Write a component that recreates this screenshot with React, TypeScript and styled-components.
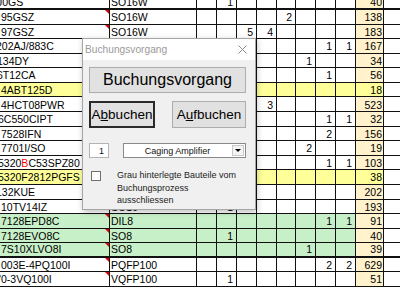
import React from 'react'
import styled, { createGlobalStyle } from 'styled-components'

const GlobalStyle = createGlobalStyle`
  body {
    margin: 0;
    background: #fff;
    overflow: hidden;
  }
`

type Tone = 'plain' | 'yellow' | 'green'

type SheetRow = {
  part: React.ReactNode
  shift?: number
  pkg: string
  counts: Record<number, number>
  sum: number
  tone?: Tone
  note?: boolean
  thick?: boolean
}

const Red = styled.span`
  color: #ff0000;
`

const rows: SheetRow[] = [
  { part: 'J0GS', shift: -4, pkg: 'SO16W', counts: { 1: 1 }, sum: 40, note: true, thick: true },
  { part: '95GSZ', pkg: 'SO16W', counts: { 4: 2 }, sum: 138, note: true },
  { part: '97GSZ', pkg: 'SO16W', counts: { 2: 5, 3: 4 }, sum: 183, note: true },
  { part: '202AJ/883C', shift: -5, pkg: 'SO16W', counts: { 6: 1, 7: 1 }, sum: 167 },
  { part: '134DY', shift: -4, pkg: 'SO8', counts: { 5: 1 }, sum: 34 },
  { part: '6T12CA', shift: -4, pkg: 'SO8', counts: { 6: 1 }, sum: 56 },
  { part: '4ABT125D', pkg: 'SO14', counts: {}, sum: 18, tone: 'yellow' },
  { part: '4HCT08PWR', pkg: 'TSSOP14', counts: { 3: 3 }, sum: 523 },
  { part: '6C550CIPT', shift: -3, pkg: 'TQFP48', counts: { 6: 1, 7: 1 }, sum: 32 },
  { part: '7528IFN', pkg: 'DIP14', counts: { 6: 2 }, sum: 156 },
  { part: '7701I/SO', pkg: 'SO8', counts: { 5: 2 }, sum: 19 },
  {
    part: (
      <>
        5320<Red>B</Red>C53SPZ80
      </>
    ),
    shift: -3,
    pkg: 'LQFP80',
    counts: { 6: 1, 7: 1 },
    sum: 103,
  },
  { part: '5320F2812PGFS', shift: -3, pkg: 'LQFP176', counts: {}, sum: 38, tone: 'yellow' },
  { part: '132KUE', shift: -5, pkg: 'SOT23', counts: {}, sum: 202 },
  { part: '10TV14IZ', pkg: 'SO16', counts: { 1: 1 }, sum: 193 },
  { part: '7128EPD8C', pkg: 'DIL8', counts: { 6: 1, 7: 1 }, sum: 91, tone: 'green', note: true },
  { part: '7128EVO8C', pkg: 'SO8', counts: { 1: 1 }, sum: 40, tone: 'green', note: true },
  { part: '7S10XLVO8I', pkg: 'SO8', counts: { 5: 1 }, sum: 39, tone: 'green', note: true, thick: true },
  { part: '003E-4PQ100I', pkg: 'PQFP100', counts: { 6: 2, 7: 2 }, sum: 629, note: true },
  { part: "'0-3VQ100I", shift: -2, pkg: 'VQFP100', counts: { 1: 1 }, sum: 51, note: true },
]

const toneColor: Record<Tone, string> = {
  plain: '#ffffff',
  yellow: '#ffff99',
  green: '#c8f0c8',
}

const Screen = styled.div`
  position: relative;
  width: 400px;
  height: 289px;
  overflow: hidden;
  font-family: 'Liberation Sans', Arial, sans-serif;
`

const Sheet = styled.div`
  margin-top: -4.58px;
  font-size: 10.5px;
  color: #000;
`

const Row = styled.div<{ $tone: Tone; $thick?: boolean }>`
  display: grid;
  grid-template-columns: 110px 87px 20px 20px 20px 20px 19px 20px 20px 20px 28px 1fr;
  height: 14.58px;
  box-sizing: border-box;
  border-bottom: ${({ $thick }) => ($thick ? 2 : 1)}px solid #111;
  background: ${({ $tone }) => toneColor[$tone]};
`

const Cell = styled.div<{ $note?: boolean }>`
  position: relative;
  box-sizing: border-box;
  border-right: 1px solid #111;
  display: flex;
  align-items: flex-end;
  padding: 0 0 1px 1px;
  line-height: 1;
  white-space: nowrap;
  overflow: hidden;

  &::after {
    content: '';
    display: ${({ $note }) => ($note ? 'block' : 'none')};
    position: absolute;
    top: 0;
    right: 0;
    border-top: 4px solid #e00000;
    border-left: 4px solid transparent;
  }
`

const PartText = styled.span``

const NumCell = styled(Cell)`
  justify-content: flex-end;
  padding: 0 3px 1px 0;
`

const SumCell = styled(NumCell)<{ $tone: Tone }>`
  padding-right: 1px;
  background: ${({ $tone }) => ($tone === 'yellow' ? '#ffff99' : '#fff2cc')};
`

const Filler = styled.div`
  background: #fff;
`

const Dialog = styled.div`
  position: absolute;
  left: 82px;
  top: 38px;
  width: 174px;
  height: 172px;
  box-sizing: border-box;
  border: 1px solid #a6a6a6;
  background: #f0f0f0;
  box-shadow: 1px 2px 6px rgba(0, 0, 0, 0.25);
  display: flex;
  flex-direction: column;
`

const TitleBar = styled.div`
  height: 21px;
  background: #fff;
  display: flex;
  align-items: center;
  justify-content: space-between;
  padding: 0 8px 0 2px;
  color: #9a9a9a;
  font-size: 10.2px;
`

const Body = styled.div`
  padding: 7px 9px 0 6px;
  display: flex;
  flex-direction: column;
`

const Button = styled.div<{ $focused?: boolean; $w?: number }>`
  box-sizing: border-box;
  width: ${({ $w }) => ($w ? `${$w}px` : '100%')};
  height: 27px;
  background: #e1e1e1;
  border: ${({ $focused }) => ($focused ? '2px solid #2a2a2a' : '1px solid #adadad')};
  display: flex;
  align-items: center;
  justify-content: center;
  font-size: 13.5px;
  color: #000;
`

const BigButton = styled(Button)`
  height: 26px;
  font-size: 16px;
`

const ButtonRow = styled.div`
  display: flex;
  justify-content: space-between;
  margin-top: 8px;
`

const InputRow = styled.div`
  display: flex;
  margin-top: 15px;
  height: 15px;
  font-size: 9px;
  color: #111;
`

const NumberBox = styled.div`
  box-sizing: border-box;
  width: 20px;
  background: #fff;
  border: 1px solid #b4b4b4;
  display: flex;
  align-items: center;
  justify-content: center;
  padding-left: 5px;
`

const Select = styled.div`
  box-sizing: border-box;
  flex: 1;
  margin-left: 14px;
  background: #fff;
  border: 1px solid #8a8a8a;
  display: flex;
  align-items: stretch;
`

const SelectLabel = styled.div`
  flex: 1;
  display: flex;
  align-items: center;
  justify-content: center;
`

const SelectArrow = styled.div`
  box-sizing: border-box;
  width: 12px;
  margin: 1px;
  border: 1px solid #c8c8c8;
  background: #f4f4f4;
  display: flex;
  align-items: center;
  justify-content: center;

  &::before {
    content: '';
    border-top: 3px solid #000;
    border-left: 3px solid transparent;
    border-right: 3px solid transparent;
  }
`

const CheckRow = styled.div`
  display: flex;
  align-items: flex-start;
  margin-top: 11px;
`

const CheckBox = styled.div`
  box-sizing: border-box;
  width: 10px;
  height: 10px;
  margin: 2px 0 0 2px;
  background: #fff;
  border: 1px solid #707070;
`

const CheckLabel = styled.div`
  margin-left: 16px;
  font-size: 9px;
  line-height: 12.5px;
  color: #1c1c1c;
`

const CloseIcon = () => (
  <svg width="9" height="9" viewBox="0 0 9 9">
    <path d="M0.5 0.5 L8.5 8.5 M8.5 0.5 L0.5 8.5" stroke="#8c8c8c" strokeWidth="1" />
  </svg>
)

export default function App() {
  return (
    <Screen>
      <GlobalStyle />
      <Sheet>
        {rows.map((r, i) => {
          const tone = r.tone ?? 'plain'
          return (
            <Row key={i} $tone={tone} $thick={r.thick}>
              <Cell $note={r.note}>
                <PartText style={{ marginLeft: r.shift ?? 0 }}>{r.part}</PartText>
              </Cell>
              <Cell>{r.pkg}</Cell>
              {Array.from({ length: 8 }, (_, c) => (
                <NumCell key={c}>{r.counts[c] ?? ''}</NumCell>
              ))}
              <SumCell $tone={tone}>{r.sum}</SumCell>
              <Filler />
            </Row>
          )
        })}
      </Sheet>

      <Dialog>
        <TitleBar>
          <span>Buchungsvorgang</span>
          <CloseIcon />
        </TitleBar>
        <Body>
          <BigButton>Buchungsvorgang</BigButton>
          <ButtonRow>
            <Button $focused $w={66}>
              A<u>b</u>buchen
            </Button>
            <Button $w={74}>
              A<u>u</u>fbuchen
            </Button>
          </ButtonRow>
          <InputRow>
            <NumberBox>1</NumberBox>
            <Select>
              <SelectLabel>Caging Amplifier</SelectLabel>
              <SelectArrow />
            </Select>
          </InputRow>
          <CheckRow>
            <CheckBox />
            <CheckLabel>
              Grau hinterlegte Bauteile vom
              <br />
              Buchungsprozess
              <br />
              ausschliessen
            </CheckLabel>
          </CheckRow>
        </Body>
      </Dialog>
    </Screen>
  )
}
